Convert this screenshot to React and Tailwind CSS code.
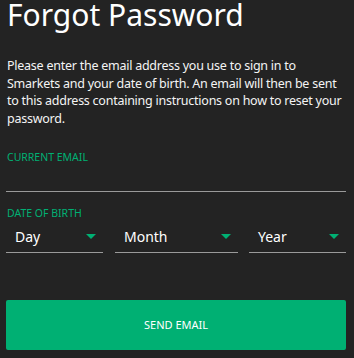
import React from "react";

const Caret = () => (
  <svg width="10" height="5" viewBox="0 0 10 5" className="shrink-0">
    <path d="M0 0h10L5 5z" fill="#00b073" />
  </svg>
);

const DateSelect = ({ label, className }) => (
  <div
    className={`flex items-center justify-between h-[33px] pl-[9px] pr-[7px] border-b border-[#9a9a9a] ${className}`}
  >
    <span className="text-[14px] text-white">{label}</span>
    <Caret />
  </div>
);

export default function App() {
  return (
    <div className="w-[354px] h-[358px] bg-[#232323] text-white pl-[6px] pr-[8px] overflow-hidden font-['Noto_Sans',sans-serif]">
      <h1 className="text-[30px] leading-[30px] pl-[1px] font-normal">Forgot Password</h1>
      <p className="mt-[27px] pl-[1px] text-[12.5px] leading-[17.5px] tracking-[-0.25px] text-[#f4f4f4]">
        Please enter the email address you use to sign in to Smarkets and your date of birth. An
        email will then be sent to this address containing instructions on how to reset your
        password.
      </p>
      <div className="mt-[23px]">
        <label className="block text-[10.5px] leading-[14px] text-[#00b073] pl-[1px]">CURRENT EMAIL</label>
        <div className="h-[28px] border-b border-[#9a9a9a]" />
      </div>
      <div className="mt-[14px]">
        <label className="block text-[10.5px] leading-[14px] text-[#00b073] pl-[1px]">DATE OF BIRTH</label>
        <div className="flex gap-[12px]">
          <DateSelect label="Day" className="w-[97px]" />
          <DateSelect label="Month" className="w-[123px]" />
          <DateSelect label="Year" className="w-[97px] ml-[-1px]" />
        </div>
      </div>
      <button className="mt-[47px] w-full h-[50px] rounded-[2px] bg-[#00b073] text-[11px] text-white flex items-center justify-center">
        SEND EMAIL
      </button>
    </div>
  );
}
